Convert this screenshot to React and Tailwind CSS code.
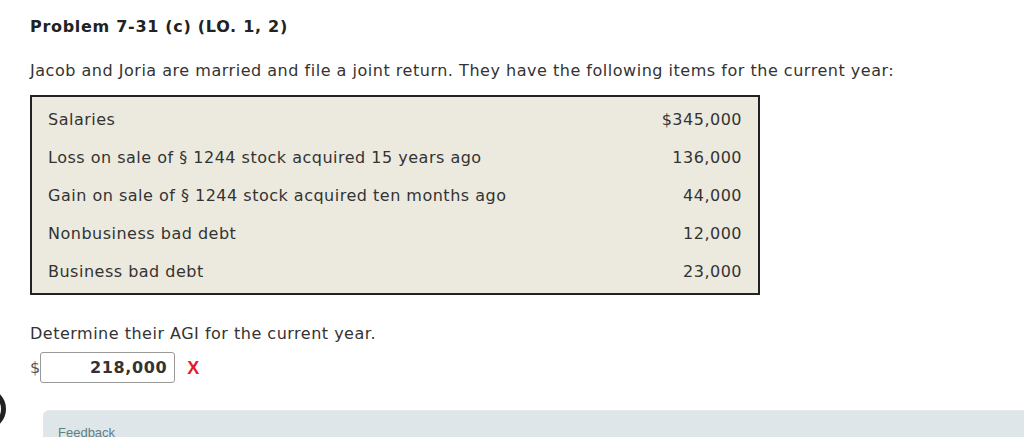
import React from "react";

const ITEMS = [
  { label: "Salaries", value: "$345,000" },
  { label: "Loss on sale of § 1244 stock acquired 15 years ago", value: "136,000" },
  { label: "Gain on sale of § 1244 stock acquired ten months ago", value: "44,000" },
  { label: "Nonbusiness bad debt", value: "12,000" },
  { label: "Business bad debt", value: "23,000" },
];

export default function App() {
  return (
    <div
      className="relative w-[1024px] h-[437px] overflow-hidden bg-white text-[#333]"
      style={{ fontFamily: '"DejaVu Sans", Verdana, sans-serif' }}
    >
      <div className="pl-[30px] pt-[17px]">
        <h2 className="text-[16px] font-bold leading-[20px] tracking-[0.7px] text-[#222]">
          Problem 7-31 (c) (LO. 1, 2)
        </h2>

        <p className="mt-[24px] text-[16px] leading-[20px] tracking-[0.52px]">
          Jacob and Joria are married and file a joint return. They have the following items for the current year:
        </p>

        {/* items box */}
        <div className="mt-[14px] w-[730px] h-[200px] border-2 border-[#222] bg-[#eceadf] px-[16px] pt-[4px]">
          {ITEMS.map((it) => (
            <div
              key={it.label}
              className="flex items-center justify-between h-[38px] text-[16px] tracking-[0.5px]"
            >
              <span>{it.label}</span>
              <span>{it.value}</span>
            </div>
          ))}
        </div>

        <p className="mt-[29px] text-[16px] leading-[20px] tracking-[0.5px]">
          Determine their AGI for the current year.
        </p>

        <div className="mt-[8px] flex items-center">
          <span className="text-[16px] text-[#555]">$</span>
          <div className="w-[135px] h-[31px] border border-[#999] rounded-[3px] bg-white flex items-center justify-end pr-[7px] text-[16px] font-bold tracking-[0.6px] text-[#333]">
            218,000
          </div>
          <span
            className="ml-[12px] text-[#e8192c] font-bold text-[18px] leading-none"
            style={{ fontFamily: '"Liberation Sans", Arial, sans-serif' }}
          >
            X
          </span>
        </div>
      </div>

      {/* cut-off round button at left edge */}
      <div className="absolute left-[-36px] top-[388px] w-[42px] h-[42px] rounded-full border-[5px] border-[#222]" />

      {/* feedback panel */}
      <div className="absolute left-[43px] top-[410px] right-0 h-[40px] bg-[#dfe6e9] border-t border-[#e6ecee] rounded-tl-[6px] pl-[15px] pt-[9px]">
        <span
          className="text-[13px] leading-[14px] text-[#5f7f86]"
          style={{ fontFamily: '"Liberation Sans", Arial, sans-serif' }}
        >
          Feedback
        </span>
      </div>
    </div>
  );
}
